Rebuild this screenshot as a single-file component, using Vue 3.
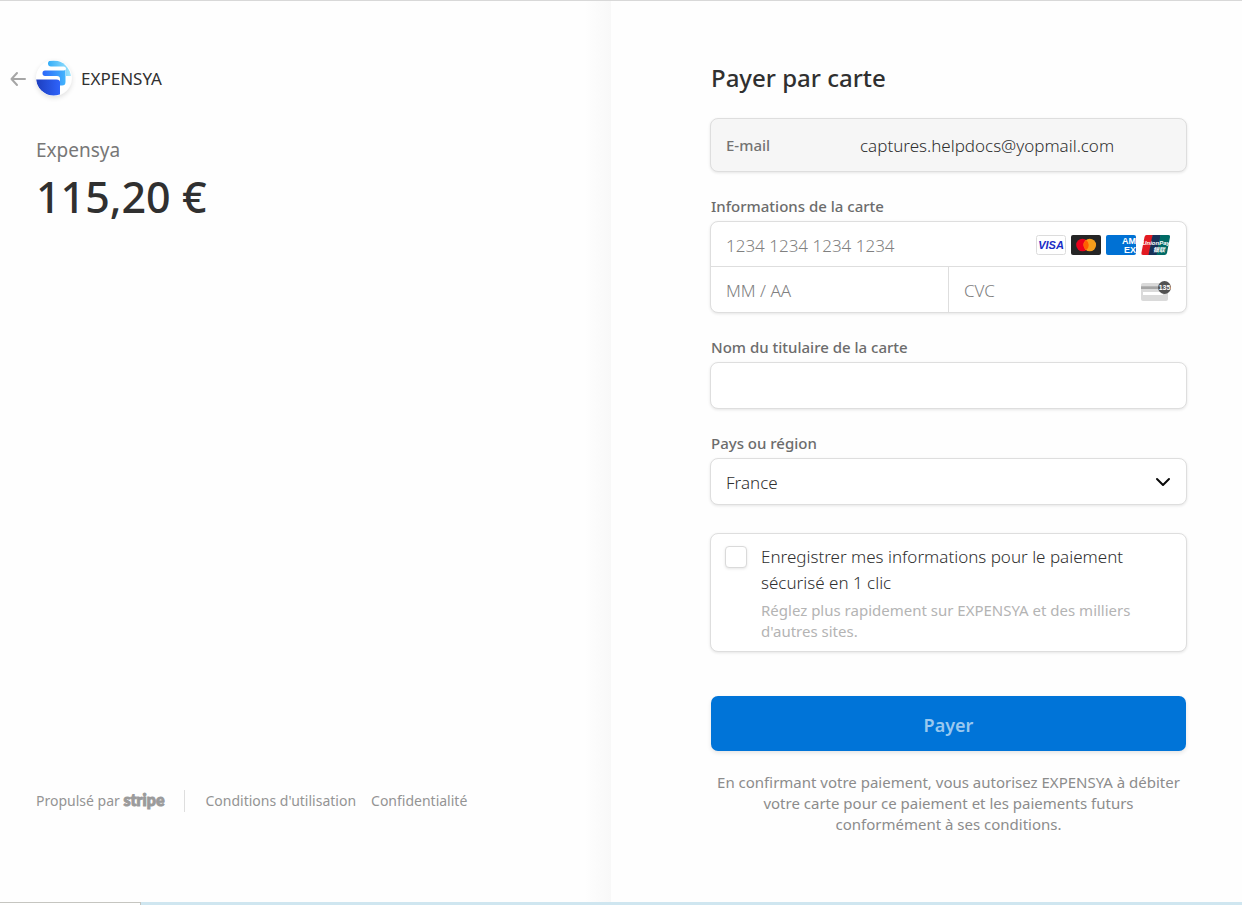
<script setup>
import { ref } from 'vue'

const cardNumber = ref('')
const expiry = ref('')
const cvc = ref('')
const holder = ref('')
const country = ref('France')
const countries = ['France', 'Belgique', 'Suisse', 'Luxembourg']
const save = ref(false)
</script>

<template>
  <div class="page">
    <div class="columns">
      <section class="summary">
        <header class="merchant">
          <a class="back" href="#" aria-label="Retour">
            <svg width="16" height="16" viewBox="0 0 16 16" fill="none" stroke="#a6a6a6" stroke-width="2" stroke-linecap="round" stroke-linejoin="round">
              <path d="M7 2 1.500 8 7 14M1.500 8H15" />
            </svg>
          </a>
          <svg class="logo" width="36" height="36" viewBox="0 0 36 36" aria-hidden="true">
            <defs>
              <linearGradient id="top" x1="0" x2="1"><stop offset="0" stop-color="#35adf8" /><stop offset="1" stop-color="#a5e8fd" /></linearGradient>
              <linearGradient id="mid" x1="0" x2="1"><stop offset="0" stop-color="#2c67fa" /><stop offset="1" stop-color="#43b5fd" /></linearGradient>
              <linearGradient id="low" x1="0" x2="1"><stop offset="0" stop-color="#1d3dbd" /><stop offset="1" stop-color="#2e63fa" /></linearGradient>
              <clipPath id="disc"><circle cx="17.500" cy="18" r="17.500" /></clipPath>
            </defs>
            <circle cx="17.500" cy="18" r="17.500" fill="#fff" />
            <g clip-path="url(#disc)">
              <path d="M15 .5H36V16H30V9Q30 6.500 27.500 6.500H15Q12 6.500 12 3.500T15 .5Z" fill="url(#top)" />
              <path d="M9 10.500H26.500Q29.500 10.500 29.500 9V22Q29.500 25.500 26 25.500H24V19Q24 16 21 16H9Q6.500 16 6.500 13.300T9 10.500Z" fill="url(#mid)" />
              <path d="M0 19.500H20.500Q24 19.500 24 22V36H0Z" fill="url(#low)" />
            </g>
          </svg>
          <span class="merchant-name">EXPENSYA</span>
        </header>
        <p class="product">Expensya</p>
        <p class="amount">115,20 €</p>

        <footer class="footer">
          <a class="powered" href="#">Propulsé par <strong>stripe</strong></a>
          <span class="divider"></span>
          <a href="#">Conditions d'utilisation</a>
          <a href="#">Confidentialité</a>
        </footer>
      </section>

      <main class="payment">
        <form class="form" @submit.prevent>
          <h1>Payer par carte</h1>

          <div class="box email">
            <span class="email-label">E-mail</span>
            <span class="email-value">captures.helpdocs@yopmail.com</span>
          </div>

          <fieldset class="field">
            <legend>Informations de la carte</legend>
            <div class="box card">
              <div class="cell number">
                <input v-model="cardNumber" aria-label="Numéro de carte" placeholder="1234 1234 1234 1234" />
                <div class="brands">
                  <svg width="30" height="20" viewBox="0 0 30 20" role="img" aria-label="Visa">
                    <rect x=".5" y=".5" width="29" height="19" rx="2" fill="#fff" stroke="#dcdcdc" />
                    <text x="15" y="14" text-anchor="middle" class="visa">VISA</text>
                  </svg>
                  <svg width="30" height="20" viewBox="0 0 30 20" role="img" aria-label="Mastercard">
                    <rect width="30" height="20" rx="2" fill="#252525" />
                    <circle cx="11.500" cy="10" r="6.300" fill="#eb001b" />
                    <circle cx="18.800" cy="10" r="6.300" fill="#f79e1b" />
                    <path d="M15.150 4.900a6.300 6.300 0 0 1 0 10.200a6.300 6.300 0 0 1 0-10.200Z" fill="#ff5f00" />
                  </svg>
                  <svg width="30" height="20" viewBox="0 0 30 20" role="img" aria-label="American Express">
                    <rect width="30" height="20" rx="2" fill="#0071d4" />
                    <text x="30" y="9" text-anchor="end" class="amex">AM</text>
                    <text x="30" y="18" text-anchor="end" class="amex">EX</text>
                  </svg>
                  <svg width="30" height="20" viewBox="0 0 30 20" role="img" aria-label="UnionPay">
                    <path d="M5.500 0H12L8 20H2Q0 20 .400 18L3.500 2Q4 0 5.500 0Z" fill="#e21b22" />
                    <path d="M11.500 0H20L16 20H7.500Z" fill="#173158" />
                    <path d="M19.500 0H27.500Q29.500 0 29 2L26 18Q25.500 20 23.500 20H15.500Z" fill="#006a65" />
                    <text x="15" y="10" text-anchor="middle" class="union">UnionPay</text>
                    <text x="18" y="17" text-anchor="middle" class="union-cn">银联</text>
                  </svg>
                </div>
              </div>
              <div class="split">
                <div class="cell"><input v-model="expiry" aria-label="Date d'expiration" placeholder="MM / AA" /></div>
                <div class="cell cvc">
                  <input v-model="cvc" aria-label="CVC" placeholder="CVC" />
                  <svg width="30" height="20" viewBox="0 0 30 20" aria-hidden="true">
                    <rect y="2" width="27" height="18" rx="2" fill="#dadada" />
                    <rect y="5" width="27" height="2" fill="#b5b5b5" />
                    <rect y="6" width="27" height="2" fill="#a5a5a5" />
                    <rect x="2" y="11" width="20" height="3" fill="#fff" />
                    <circle cx="23.500" cy="6.500" r="6.500" fill="#525252" />
                    <text x="23.500" y="9" text-anchor="middle" class="code">135</text>
                  </svg>
                </div>
              </div>
            </div>
          </fieldset>

          <div class="field">
            <label for="holder">Nom du titulaire de la carte</label>
            <input id="holder" v-model="holder" class="box control" />
          </div>

          <div class="field">
            <label for="country">Pays ou région</label>
            <div class="select-wrap">
              <select id="country" v-model="country" class="box control">
                <option v-for="c in countries" :key="c">{{ c }}</option>
              </select>
              <svg class="chevron" width="16" height="10" viewBox="0 0 16 10" fill="none" stroke="#0a0a0a" stroke-width="2" stroke-linecap="round" stroke-linejoin="round" aria-hidden="true">
                <path d="M2 2 8 8 14 2" />
              </svg>
            </div>
          </div>

          <div class="box save">
            <input id="save" v-model="save" type="checkbox" aria-describedby="save-hint" />
            <div>
              <label for="save">Enregistrer mes informations pour le paiement sécurisé en 1 clic</label>
              <p id="save-hint">Réglez plus rapidement sur EXPENSYA et des milliers d'autres sites.</p>
            </div>
          </div>

          <button class="pay" type="submit">Payer</button>
          <p class="legal">En confirmant votre paiement, vous autorisez EXPENSYA à débiter votre carte pour ce paiement et les paiements futurs conformément à ses conditions.</p>
        </form>
      </main>
    </div>
    <div class="strip"><span></span></div>
  </div>
</template>

<style>
body {
  margin: 0;
  background: #fefefe;
}
</style>

<style scoped>
.page {
  min-height: 100vh;
  box-sizing: border-box;
  display: flex;
  flex-direction: column;
  border-top: 1px solid #d8d8d8;
  font-family: "Noto Sans", "Open Sans", sans-serif;
  font-weight: 300;
  color: #303030;
}
.page * {
  box-sizing: border-box;
}
p, h1 {
  margin: 0;
}
a {
  color: inherit;
  text-decoration: none;
}
.columns {
  flex: 1;
  display: grid;
  grid-template-columns: minmax(0, 611fr) minmax(0, 631fr);
}
.summary {
  display: flex;
  flex-direction: column;
  padding: 59px 36px 89px;
  background: linear-gradient(to left, #f8f8f8, #fefefe 26px);
}
.merchant {
  display: flex;
  align-items: center;
  height: 36px;
  margin-left: -26px;
}
.back {
  width: 26px;
  height: 16px;
}
.logo {
  border-radius: 50%;
  box-shadow: 0 2px 5px rgba(0, 0, 0, 0.12);
}
.merchant-name {
  margin-left: 9px;
  font-size: 17px;
  font-weight: 400;
}
.product {
  margin-top: 40px;
  font-size: 19px;
  line-height: 28px;
  font-weight: 400;
  color: #777;
}
.amount {
  margin-top: 4px;
  font-size: 43px;
  line-height: 58px;
  font-weight: 500;
}
.footer {
  display: flex;
  align-items: center;
  margin-top: auto;
  font-size: 14px;
  line-height: 24px;
  font-weight: 400;
  white-space: nowrap;
  color: #949494;
}
.footer a + a {
  margin-left: 15px;
}
.powered strong {
  font-family: Lato, sans-serif;
  font-size: 16px;
  line-height: 20px;
  font-weight: 900;
  color: #9b9b9b;
  -webkit-text-stroke: 1px #9b9b9b;
}
.divider {
  width: 1px;
  height: 22px;
  margin: 0 20px;
  background: #dedede;
}
.payment {
  padding: 59px 55px 40px 99px;
}
.form {
  display: flex;
  flex-direction: column;
}
h1 {
  padding-left: 1px;
  font-size: 24px;
  line-height: 36px;
  font-weight: 500;
}
.box {
  border: 1px solid #dedede;
  border-radius: 8px;
  background: #fff;
  box-shadow: 0 1px 3px rgba(0, 0, 0, 0.1);
}
.email {
  display: flex;
  align-items: center;
  height: 54px;
  margin-top: 22px;
  padding: 0 15px;
  background: #f6f6f6;
}
.email-label {
  width: 134px;
  font-size: 15px;
  font-weight: 500;
  color: #737373;
}
.email-value {
  font-size: 17px;
}
.field {
  display: block;
  min-width: 0;
  margin: 23px 0 0;
  padding: 0;
  border: 0;
}
.field legend,
.field label {
  display: block;
  padding: 0 1px;
  margin-bottom: 4px;
  font-size: 15px;
  line-height: 22px;
  font-weight: 500;
  color: #6c6c6c;
}
input,
select {
  font: inherit;
  color: inherit;
}
.cell {
  display: flex;
  align-items: center;
  flex: 1;
  min-width: 0;
  height: 45px;
  padding: 2px 15px 0;
}
.number {
  height: 44px;
}
.cell input {
  flex: 1;
  min-width: 0;
  padding: 0;
  border: 0;
  outline: 0;
  background: none;
  font-size: 17px;
}
.cell input::placeholder {
  color: #808080;
  opacity: 1;
}
.brands {
  display: flex;
  gap: 5px;
}
.split {
  display: flex;
  border-top: 1px solid #dedede;
}
.cvc {
  border-left: 1px solid #dedede;
}
.control {
  display: block;
  width: 100%;
  height: 47px;
  padding: 2px 15px 0;
  font-size: 17px;
  appearance: none;
}
.select-wrap {
  position: relative;
}
.chevron {
  position: absolute;
  top: 19px;
  right: 16px;
  pointer-events: none;
}
.save {
  display: flex;
  gap: 14px;
  margin-top: 28px;
  padding: 10px 14px 9px;
}
.save input {
  flex: none;
  width: 22px;
  height: 22px;
  margin: 2px 0 0;
  border: 1px solid #dadada;
  border-radius: 4px;
  background: #fff;
  box-shadow: 0 1px 3px rgba(0, 0, 0, 0.1);
  appearance: none;
}
.save input:checked {
  background: #0074d8;
}
.save label {
  display: block;
  font-size: 17px;
  line-height: 26px;
}
.save p {
  margin-top: 4px;
  font-size: 15px;
  line-height: 21px;
  font-weight: 400;
  color: #b4b4b4;
}
.pay {
  height: 55px;
  margin: 44px 1px 0;
  padding: 2px 0 0;
  border: 0;
  border-radius: 7px;
  background: #0074d8;
  box-shadow: 0 2px 4px rgba(0, 0, 0, 0.1);
  font: 600 18px "Noto Sans", sans-serif;
  color: #99c8ef;
}
.legal {
  margin-top: 21px;
  text-align: center;
  font-size: 15px;
  line-height: 21px;
  font-weight: 400;
  color: #8c8c8c;
}
.strip {
  height: 3px;
  background: #cfe6f0;
}
.strip span {
  display: block;
  width: 141px;
  height: 3px;
  border-top: 1px solid #c5c5c0;
  border-right: 1px solid #c5c5c0;
  background: #fefefe;
}
.visa {
  font: italic 700 11px "Liberation Sans", sans-serif;
  fill: #1a2bc5;
}
.amex {
  font: 700 9px "Liberation Sans", sans-serif;
  fill: #fff;
}
.union {
  font: italic 700 6px "Liberation Sans", sans-serif;
  fill: #fff;
}
.union-cn {
  font: italic 700 6px "Noto Sans CJK SC", sans-serif;
  fill: #fff;
}
.code {
  font: 700 7px "Liberation Sans", sans-serif;
  fill: #fff;
}
</style>
